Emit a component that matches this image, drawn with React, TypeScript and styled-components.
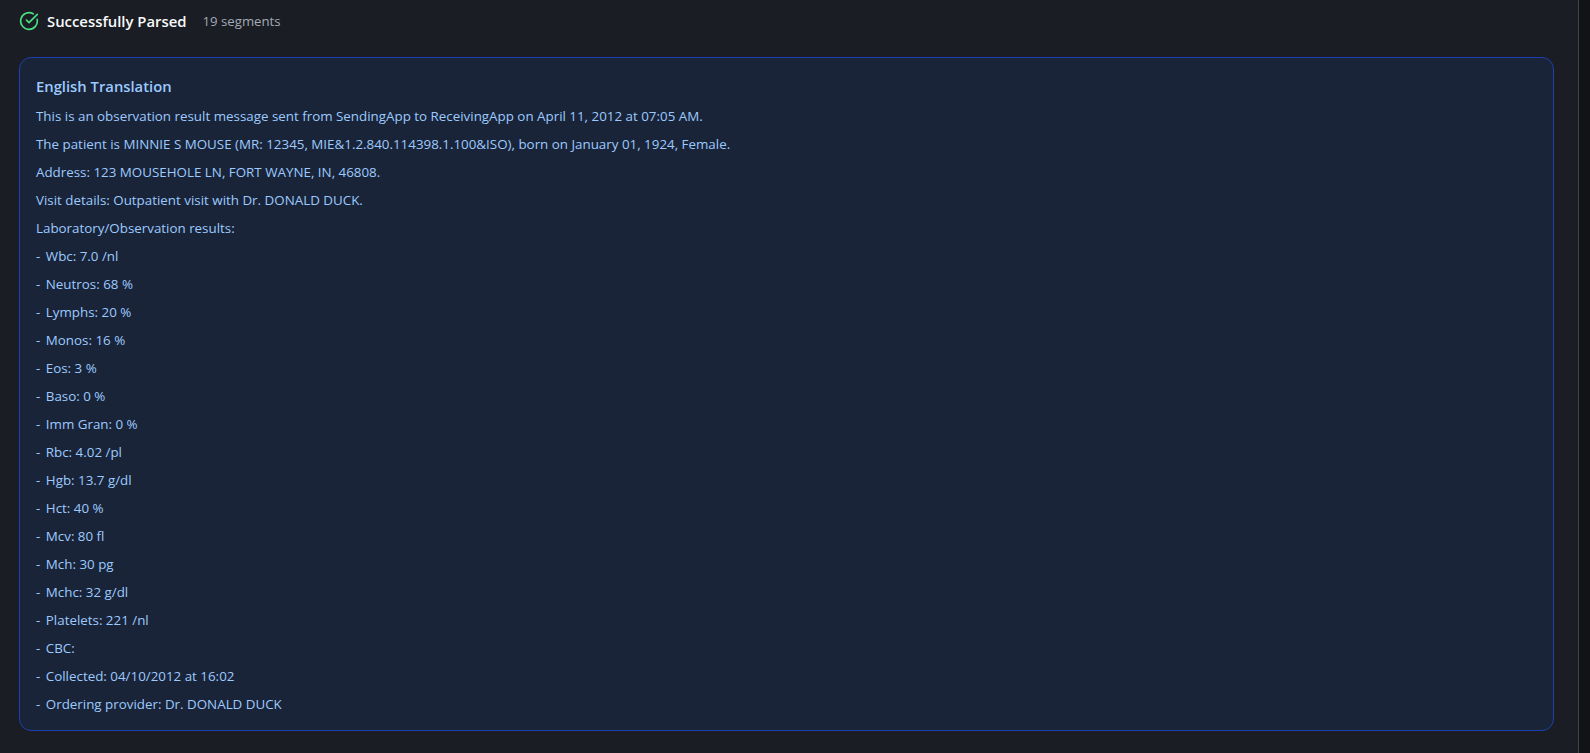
import React from "react";
import styled, { createGlobalStyle } from "styled-components";
import { CircleCheckBig } from "lucide-react";

const Global = createGlobalStyle`
  html, body { margin: 0; padding: 0; height: 100%; background: #111316; overflow: hidden; }
  #root { height: 100%; }
`;

const Shell = styled.div`
  display: flex;
  height: 753px;
  font-family: "Open Sans", "Noto Sans", sans-serif;
`;

const Main = styled.main`
  flex: 0 0 1579px;
  box-sizing: border-box;
  background: #1a1d23;
  border-right: 1px solid #3f444c;
  padding: 10px 24px 0 19px;
`;

const Rail = styled.div`
  flex: 1;
  background: #111316;
`;

const Header = styled.header`
  display: flex;
  align-items: center;
  height: 22px;
  margin-bottom: 25px;
`;

const StatusIcon = styled(CircleCheckBig)`
  width: 20px;
  height: 20px;
  color: #4ade80;
  margin-right: 8px;
`;

const Status = styled.span`
  font-size: 14.86px;
  font-weight: 600;
  color: #f9fafb;
  margin-right: 16px;
`;

const Count = styled.span`
  font-size: 13.2px;
  color: #a3aab5;
`;

const Card = styled.section`
  box-sizing: border-box;
  height: 674px;
  background: #1a2438;
  border: 1px solid #1e40af;
  border-radius: 12px;
  padding: 16px 16px;
  color: #9ccaff;
`;

const Title = styled.h3`
  margin: 0 0 8px;
  font-size: 14.8px;
  line-height: 24px;
  font-weight: 600;
`;

const Line = styled.p`
  margin: 0 0 8px;
  font-size: 13.37px;
  line-height: 20px;
`;

const Dash = styled.span`
  margin-right: 2px;
`;

const lines = [
  "This is an observation result message sent from SendingApp to ReceivingApp on April 11, 2012 at 07:05 AM.",
  "The patient is MINNIE S MOUSE (MR: 12345, MIE&1.2.840.114398.1.100&ISO), born on January 01, 1924, Female.",
  "Address: 123 MOUSEHOLE LN, FORT WAYNE, IN, 46808.",
  "Visit details: Outpatient visit with Dr. DONALD DUCK.",
  "Laboratory/Observation results:",
  "- Wbc: 7.0 /nl",
  "- Neutros: 68 %",
  "- Lymphs: 20 %",
  "- Monos: 16 %",
  "- Eos: 3 %",
  "- Baso: 0 %",
  "- Imm Gran: 0 %",
  "- Rbc: 4.02 /pl",
  "- Hgb: 13.7 g/dl",
  "- Hct: 40 %",
  "- Mcv: 80 fl",
  "- Mch: 30 pg",
  "- Mchc: 32 g/dl",
  "- Platelets: 221 /nl",
  "- CBC:",
  "- Collected: 04/10/2012 at 16:02",
  "- Ordering provider: Dr. DONALD DUCK",
];

export default function App() {
  return (
    <Shell>
      <Global />
      <Main>
        <Header>
          <StatusIcon strokeWidth={2} />
          <Status>Successfully Parsed</Status>
          <Count>19 segments</Count>
        </Header>
        <Card>
          <Title>English Translation</Title>
          {lines.map((l) => (
            <Line key={l}>
              {l.startsWith("- ") ? (
                <>
                  <Dash>-</Dash> {l.slice(2)}
                </>
              ) : (
                l
              )}
            </Line>
          ))}
        </Card>
      </Main>
      <Rail />
    </Shell>
  );
}
